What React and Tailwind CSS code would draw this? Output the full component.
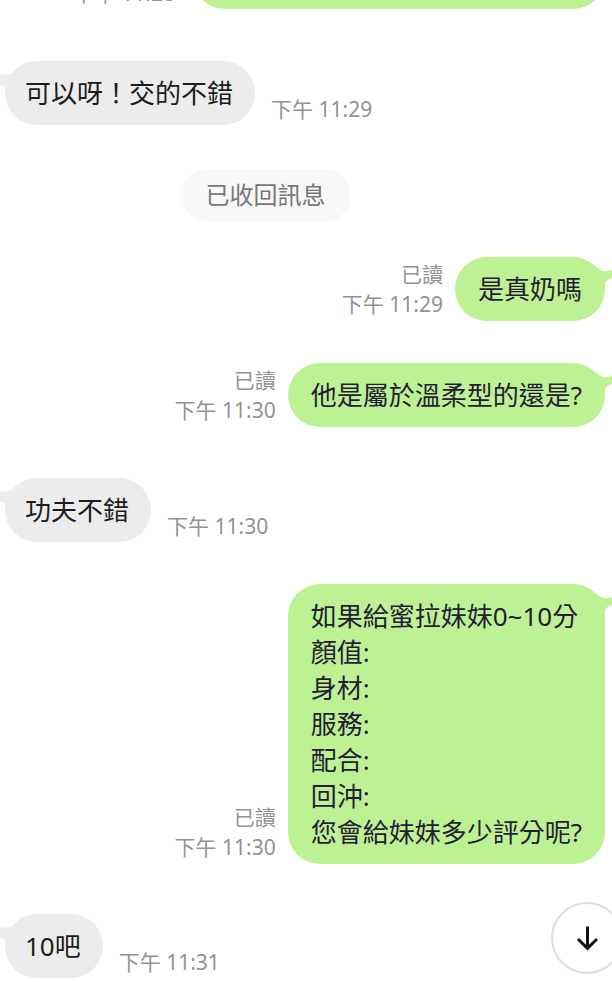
import React from "react";

const FONT = "font-['Noto_Sans','Noto_Sans_CJK_TC',sans-serif]";

function ReceivedTail() {
  return (
    <svg className="absolute top-3 -left-[5px] h-[18px] w-[19px]" viewBox="0 0 19 18" aria-hidden="true">
      <path d="M0 1C4 2 9 2 14 0H19V18H5C6 14 4 12 0 12Z" fill="#ececec" />
    </svg>
  );
}

function SentTail() {
  return (
    <svg className="absolute top-2 -right-[7px] h-[22px] w-[25px]" viewBox="0 0 25 22" aria-hidden="true">
      <path d="M0 2H10C14 7 19 7 25 5V13C20 15 17 17 18 22H0Z" fill="#bdf294" />
    </svg>
  );
}

function Received({ text, time, className }) {
  return (
    <article className={`flex items-end gap-4 pl-[5px] ${className}`}>
      <div className="relative shrink-0 rounded-[32px] bg-[#ececec] pt-[14px] pr-[22px] pb-[14px] pl-5 text-[26px] leading-9 text-[#1c1c1c]">
        <ReceivedTail />
        <p className="relative whitespace-nowrap">{text}</p>
      </div>
      <time className="pb-px text-[21px] leading-[30px] whitespace-nowrap text-[#939393]">{time}</time>
    </article>
  );
}

function Sent({ lines, time, className }) {
  return (
    <article className={`flex items-end justify-end gap-3 pr-[7px] ${className}`}>
      <div className="flex flex-col items-end pb-0.5 text-[21px] leading-[30px] whitespace-nowrap text-[#939393]">
        <span>已讀</span>
        <time>{time}</time>
      </div>
      <div className="relative shrink-0 rounded-[32px] bg-[#bdf294] px-[23px] py-[14px] text-[26px] leading-9 text-[#261c33]">
        <SentTail />
        {lines.map((line) => (
          <p key={line} className="relative whitespace-nowrap">{line}</p>
        ))}
      </div>
    </article>
  );
}

export default function App() {
  return (
    <main className={`relative flex min-h-screen flex-col overflow-hidden bg-white pb-1 ${FONT}`}>
      <article className="-mt-[55px] flex items-end justify-end gap-[18px] pr-[7px]">
        <time className="pb-px text-[21px] leading-[30px] whitespace-nowrap text-[#939393]">下午 11:28</time>
        <div className="h-16 w-[412px] rounded-[32px] bg-[#bdf294]" />
      </article>
      <Received className="mt-[52px]" text="可以呀！交的不錯" time="下午 11:29" />
      <div className="mt-11 flex justify-center pr-[81px]">
        <p className="rounded-3xl bg-[#f8f8f8] px-6 py-2 text-2xl leading-9 text-[#777777]">已收回訊息</p>
      </div>
      <Sent className="mt-9" lines={["是真奶嗎"]} time="下午 11:29" />
      <Sent className="mt-[42px]" lines={["他是屬於溫柔型的還是?"]} time="下午 11:30" />
      <Received className="mt-[51px]" text="功夫不錯" time="下午 11:30" />
      <Sent
        className="mt-[42px]"
        lines={["如果給蜜拉妹妹0~10分", "顏值:", "身材:", "服務:", "配合:", "回沖:", "您會給妹妹多少評分呢?"]}
        time="下午 11:30"
      />
      <Received className="mt-[50px]" text="10吧" time="下午 11:31" />
      <button
        type="button"
        aria-label="Scroll to latest"
        className="absolute -right-[11px] bottom-2 flex size-[72px] items-center justify-center rounded-full border-2 border-[#dedede] bg-white"
      >
        <svg className="size-7" viewBox="0 0 28 28" fill="none" stroke="#111111" strokeWidth="3" aria-hidden="true">
          <path d="M14.5 2.5V24M5 15L14.5 24.3L24 15" />
        </svg>
      </button>
    </main>
  );
}
